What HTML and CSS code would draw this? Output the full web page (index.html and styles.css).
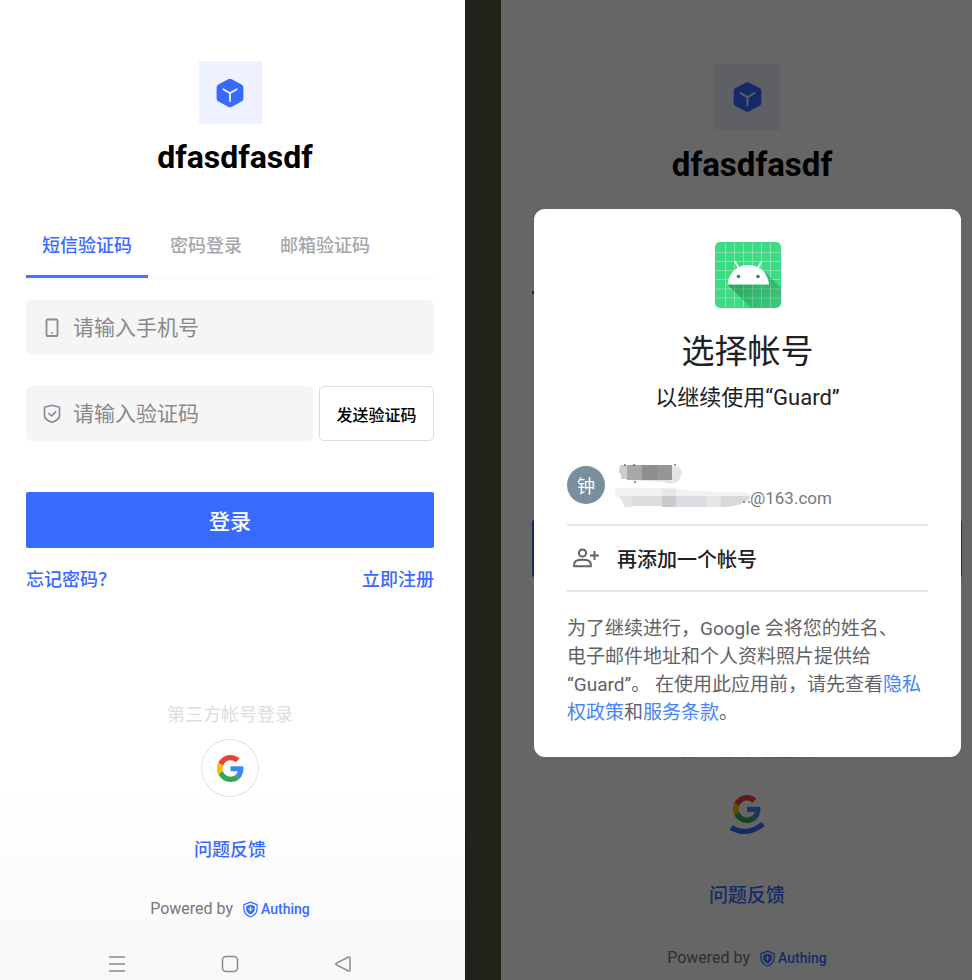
FILE: index.html
```html
<!DOCTYPE html>
<html lang="zh-CN">
<head>
<meta charset="utf-8">
<meta name="viewport" content="width=device-width, initial-scale=1">
<title>dfasdfasdf</title>
<link rel="stylesheet" href="styles.css">
</head>
<body>
<svg class="defs" aria-hidden="true">
  <symbol id="cube" viewBox="0 0 28 30">
    <path d="M12.2 1.2Q14 .2 15.800 1.200L25.600 6.400Q27.400 7.500 27.400 9.500V20.500Q27.400 22.500 25.600 23.600L15.800 28.800Q14 29.800 12.200 28.800L2.400 23.600Q.6 22.500 .6 20.500V9.500Q.6 7.500 2.400 6.400Z" fill="#396aff"/>
    <path d="M7.200 11.200 14 15.200 20.800 11.200M14 15.200V23" fill="none" stroke="#eef1ff" stroke-width="1.800" stroke-linecap="round" stroke-linejoin="round"/>
  </symbol>
  <symbol id="google" viewBox="0 0 48 48">
    <path fill="#ea4335" d="M24 9.500c3.540 0 6.710 1.220 9.210 3.600l6.850-6.850C35.900 2.380 30.470 0 24 0 14.620 0 6.510 5.380 2.560 13.220l7.980 6.190C12.430 13.720 17.740 9.500 24 9.500z"/>
    <path fill="#4285f4" d="M46.980 24.550c0-1.570-.15-3.090-.38-4.550H24v9.020h12.940c-.58 2.960-2.260 5.480-4.780 7.180l7.730 6c4.510-4.180 7.090-10.360 7.090-17.650z"/>
    <path fill="#fbbc05" d="M10.530 28.590c-.48-1.450-.76-2.990-.76-4.590s.27-3.140.76-4.590l-7.980-6.190C.92 16.460 0 20.120 0 24s.92 7.540 2.560 10.780l7.970-6.190z"/>
    <path fill="#34a853" d="M24 48c6.480 0 11.930-2.130 15.890-5.810l-7.730-6c-2.150 1.450-4.920 2.300-8.160 2.300-6.260 0-11.570-4.220-13.470-9.910l-7.980 6.190C6.510 42.620 14.620 48 24 48z"/>
  </symbol>
  <symbol id="authing" viewBox="0 0 16 18">
    <path d="M8 1.200 15 3.800V8.500C15 12.500 12 15.500 8 17 4 15.500 1 12.500 1 8.500V3.800Z" fill="none" stroke="#396aff" stroke-width="1.300" stroke-linejoin="round"/>
    <path d="M8 3.700 12.600 5.400V8.500C12.600 11.200 10.800 13.200 8 14.400 5.200 13.200 3.400 11.200 3.400 8.500V5.400Z" fill="#396aff"/>
    <path d="M8 5.800V11M6 7.600Q6 9.600 8 9.600T10 7.600" fill="none" stroke="#fff" stroke-width="1"/>
  </symbol>
</svg>

<main class="stage">
  <section class="screen screen-login">
    <header class="brand">
      <span class="brand-logo"><svg><use href="#cube"/></svg></span>
      <h1>dfasdfasdf</h1>
    </header>
    <nav class="tabs" aria-label="登录方式">
      <button type="button" class="tab active">短信验证码</button>
      <button type="button" class="tab">密码登录</button>
      <button type="button" class="tab">邮箱验证码</button>
    </nav>
    <form class="form">
      <label class="field">
        <svg viewBox="0 0 18 20" fill="none" stroke="#8a8b98" stroke-width="1.800"><rect x="3.500" y="1.500" width="11" height="16.500" rx="1"/><path d="M8 15h2" stroke-width="1.300"/></svg>
        <input type="tel" placeholder="请输入手机号" aria-label="请输入手机号">
      </label>
      <div class="code-row">
        <label class="field">
          <svg viewBox="0 0 18 20" fill="none" stroke="#8a8b98" stroke-width="1.700" stroke-linejoin="round" stroke-linecap="round"><path d="M9 1.300 16.500 3.300V11.500C16.500 14.500 13 17 9 18.300 5 17 1.500 14.500 1.500 11.500V3.300Z"/><path d="M5.800 9.500 8.500 12 12.600 7.800"/></svg>
          <input type="text" placeholder="请输入验证码" aria-label="请输入验证码">
        </label>
        <button type="button" class="send">发送验证码</button>
      </div>
      <button type="button" class="submit">登录</button>
    </form>
    <div class="links"><a href="#">忘记密码？</a><a href="#">立即注册</a></div>
    <p class="social-title">第三方帐号登录</p>
    <button type="button" class="google" aria-label="Google"><svg><use href="#google"/></svg></button>
    <a class="feedback" href="#">问题反馈</a>
    <p class="powered">Powered by <span class="authing"><svg><use href="#authing"/></svg>Authing</span></p>
    <nav class="sysbar">
      <button type="button" aria-label="菜单"><svg viewBox="0 0 18 18"><path d="M1 2h16M1 9h16M1 16h16"/></svg></button>
      <button type="button" aria-label="主页"><svg viewBox="0 0 18 18"><rect x="1.500" y="1.500" width="15" height="15" rx="3.500"/></svg></button>
      <button type="button" aria-label="返回"><svg viewBox="0 0 18 18"><path d="M14.500 2 2.500 8.200Q1 9 2.500 9.800L14.500 16Q16 16.500 16 15V3Q16 1.500 14.500 2Z"/></svg></button>
    </nav>
  </section>

  <div class="divider"></div>

  <section class="screen-chooser">
    <div class="backdrop">
      <header class="brand">
        <span class="brand-logo"><svg><use href="#cube"/></svg></span>
        <h1>dfasdfasdf</h1>
      </header>
      <div class="tab-line"></div>
      <div class="submit-bar"></div>
      <p class="social-title">第三方帐号登录</p>
      <div class="google-loading">
        <svg class="g"><use href="#google"/></svg>
        <svg class="arc" viewBox="0 0 36 14"><path d="M2 6.500Q18 16 34 3" fill="none" stroke="#396aff" stroke-width="5"/></svg>
      </div>
      <a class="feedback" href="#">问题反馈</a>
      <p class="powered">Powered by <span class="authing"><svg><use href="#authing"/></svg>Authing</span></p>
    </div>
    <div class="scrim"></div>
    <div class="dialog" role="dialog" aria-labelledby="dialog-title">
      <svg class="app-icon" viewBox="0 0 66 66">
        <defs>
          <clipPath id="tile"><rect width="66" height="66" rx="5"/></clipPath>
          <linearGradient id="shade" x1="0" y1="0" x2="1" y2="1"><stop offset="0" stop-color="#000" stop-opacity=".32"/><stop offset="1" stop-color="#000" stop-opacity=".06"/></linearGradient>
        </defs>
        <g clip-path="url(#tile)">
          <rect width="66" height="66" fill="#3ddc84"/>
          <path d="M10.500 0V66M19.500 0V66M28.500 0V66M37.500 0V66M46.500 0V66M55.500 0V66M0 10.500H66M0 19.500H66M0 28.500H66M0 37.500H66M0 47H66M0 56H66" stroke="#fff" stroke-opacity=".4" stroke-width=".8"/>
          <path d="M12.500 42.500 36 66H66V46L50 30 54 42.500Z" fill="url(#shade)"/>
        </g>
        <path d="M12.500 42.500C13.500 31 22 23 33.200 23S53 31 54 42.500Z" fill="#fff"/>
        <path d="M20 19.500 24 26.500M46.500 19.500 42.500 26.500" stroke="#fff" stroke-width="1.600" stroke-linecap="round"/>
        <circle cx="23.500" cy="34.500" r="1.800" fill="#24935a"/><circle cx="43" cy="34.500" r="1.800" fill="#24935a"/>
      </svg>
      <h2 id="dialog-title">选择帐号</h2>
      <p class="subtitle">以继续使用“Guard”</p>
      <button type="button" class="account">
        <span class="avatar">钟</span>
        <span class="identity">
          <svg class="masked-name" viewBox="0 0 66 20" aria-hidden="true">
            <path d="M4 1H10V15H4Q5 11 2 8 2 3 4 1Z" fill="#ccc"/><path d="M10 1H25V16H10Z" fill="#a9a8a9"/><path d="M25 1H40V16H25Z" fill="#8e8d90"/><path d="M40 1H55V16H40Z" fill="#969598"/><path d="M55 2Q64 2 65 8 64 14 60 18 52 21 47 18L10 16H55Z" fill="#e4e4e4"/><path d="M7 1h2M16 1h2M57 1h2M17 18h2" stroke="#333" stroke-width="1.200"/>
          </svg>
          <span class="mail">
            <svg viewBox="0 0 138 20" aria-hidden="true">
              <path d="M0 3Q0 0 4 0L60 0 76 3 122 4Q138 5 138 10H2Q0 8 0 3Z" fill="#f2f2f2"/><path d="M4 8H17V19H10Z" fill="#e4e4e5"/><path d="M17 8H47V18H17Z" fill="#dcdddf"/><path d="M47 8H61V19H47Z" fill="#c9cacc"/><path d="M47 1H61V8H47Z" fill="#e8e8e9"/><path d="M61 8H91V19H61Z" fill="#dcdde0"/><path d="M91 8H106V19H91Z" fill="#e6e6e7"/><path d="M106 8H134Q137 10 130 14 122 19 106 19Z" fill="#d8d9db"/><path d="M128 14h2M133 14h2" stroke="#777" stroke-width="1.500"/>
            </svg>@163.com</span>
        </span>
      </button>
      <button type="button" class="add">
        <svg viewBox="0 0 26 20" fill="none" stroke="#5f6368" stroke-width="2"><circle cx="9.500" cy="5" r="3.600"/><path d="M1.200 18.200V16C1.200 13 5 11.800 9.500 11.800S17.800 13 17.800 16V18.200ZM17 7.500H26M21.500 3V12"/></svg>
        再添加一个帐号
      </button>
      <p class="notice">为了继续进行，Google 会将您的姓名、<br>电子邮件地址和个人资料照片提供给<br>“Guard”。 在使用此应用前，请先查看<a href="#">隐私权政策</a>和<a href="#">服务条款</a>。</p>
    </div>
  </section>
</main>
</body>
</html>
```
FILE: styles.css
```css
* { box-sizing: border-box; }

body {
  margin: 0;
  font-family: Roboto, "Noto Sans CJK SC", sans-serif;
  font-size: 18px;
  color: #000;
}

h1, h2, p { margin: 0; }
a { color: #396aff; text-decoration: none; }
button { padding: 0; border: 0; background: none; font: inherit; color: inherit; cursor: pointer; }
svg { display: block; flex: none; }
.defs { position: absolute; width: 0; height: 0; }

.stage {
  display: grid;
  grid-template-columns: minmax(0, 465fr) 36px minmax(0, 471fr);
  min-height: 100vh;
}
.divider { background: #22211a; }

.screen-login {
  display: flex;
  flex-direction: column;
  padding: 61px 31px 0 26px;
  background: linear-gradient(#fff 80%, #f8f8f8);
}

.brand { display: flex; flex-direction: column; align-items: center; }
.brand-logo {
  display: grid;
  place-items: center;
  width: 63px;
  height: 63px;
  background: #eef1ff;
}
.brand-logo svg { width: 28px; height: 30px; }
.brand h1 { margin: 12px 0 0 10px; font-size: 32px; line-height: 42px; font-weight: 700; }

.tabs { display: flex; gap: 6px; margin-top: 34px; border-bottom: 1px solid #f6f6f6; }
.tab { height: 66px; padding: 0 16px; color: #a6a6a8; font-weight: 500; border-bottom: 3px solid transparent; }
.tab.active { color: #396aff; border-color: #4a74f5; }

.form { margin-top: 21px; }
.field {
  display: flex;
  align-items: center;
  flex: 1;
  min-width: 0;
  gap: 12px;
  height: 55px;
  padding: 0 17px;
  border-radius: 5px;
  background: #f5f5f6;
}
.field svg { width: 18px; height: 20px; }
.field input {
  flex: 1;
  min-width: 0;
  padding: 0;
  border: 0;
  outline: 0;
  background: none;
  font: inherit;
  font-size: 21px;
}
.field input::placeholder { color: #89898b; opacity: 1; }
.code-row { display: flex; gap: 6px; margin-top: 31px; }
.send {
  flex: none;
  width: 115px;
  border: 1px solid #dcdcdf;
  border-radius: 5px;
  background: #fff;
  font-size: 16px;
  font-weight: 500;
}
.submit {
  width: 100%;
  height: 56px;
  margin-top: 51px;
  border-radius: 2px;
  background: #396aff;
  color: #fff;
  font-size: 21px;
  font-weight: 500;
}
.links { display: flex; justify-content: space-between; margin-top: 18px; line-height: 28px; font-weight: 500; }

.social-title { margin-top: 107px; text-align: center; line-height: 28px; color: #dddce0; }
.google {
  display: grid;
  place-items: center;
  align-self: center;
  width: 58px;
  height: 58px;
  margin-top: 10px;
  border: 1px solid #e1dde6;
  border-radius: 50%;
  background: #fff;
}
.google svg { width: 27px; height: 27px; }
.feedback { align-self: center; margin-top: 39px; line-height: 28px; font-weight: 500; }
.powered { display: flex; justify-content: center; gap: 10px; margin-top: 31px; font-size: 16px; line-height: 28px; color: #77777a; }
.authing { display: flex; align-items: center; gap: 3px; color: #396aff; font-size: 14px; font-weight: 500; }
.authing svg { width: 15px; height: 17px; }

.sysbar { display: flex; justify-content: center; gap: 95px; margin-top: 32px; }
.sysbar svg { width: 18px; height: 18px; fill: none; stroke: #8b8b8d; stroke-width: 1.5; }

.screen-chooser { display: grid; align-items: start; overflow: hidden; background: #fff; }
.backdrop, .scrim, .dialog { grid-area: 1 / 1; }
.backdrop { display: flex; flex-direction: column; padding: 64px 10px 0 31px; }
.scrim { align-self: stretch; background: rgba(0, 0, 0, .6); z-index: 1; }
.backdrop .brand-logo { width: 66px; height: 66px; }
.backdrop .brand-logo svg { width: 29px; height: 32px; }
.backdrop h1 { margin-top: 14px; font-size: 33px; }
.tab-line { width: 130px; height: 3px; margin-top: 105px; background: #396aff; }
.submit-bar { height: 57px; margin-top: 226px; border-radius: 2px; background: #396aff; }
.backdrop .social-title { margin-top: 160px; font-size: 19px; }
.google-loading { display: flex; flex-direction: column; align-items: center; margin-top: 30px; }
.google-loading .g { width: 28px; height: 28px; }
.google-loading .arc { width: 36px; height: 14px; margin-top: -2px; }
.backdrop .feedback { margin-top: 47px; font-size: 19px; }
.backdrop .powered { margin-top: 34px; }

.dialog {
  z-index: 2;
  display: flex;
  flex-direction: column;
  margin: 209px 11px 0 33px;
  padding: 33px 33px 30px;
  border-radius: 11px;
  background: #fff;
}
.app-icon { align-self: center; width: 66px; height: 66px; }
.dialog h2 { margin-top: 22px; text-align: center; font-size: 33px; line-height: 44px; font-weight: 400; color: #202124; }
.subtitle { margin-top: 8px; text-align: center; font-size: 22px; line-height: 32px; color: #202124; }
.account {
  display: flex;
  align-items: flex-start;
  gap: 10px;
  margin-top: 50px;
  padding-bottom: 14px;
  border-bottom: 2px solid #e6e6e7;
  text-align: left;
}
.avatar {
  display: grid;
  place-items: center;
  width: 38px;
  height: 38px;
  margin-top: 2px;
  border-radius: 50%;
  background: #78909c;
  color: #fff;
  font-size: 18px;
}
.masked-name { width: 66px; height: 20px; margin-left: 2px; }
.mail { display: flex; align-items: center; margin-top: 2px; font-size: 17px; line-height: 24px; color: #77787b; }
.mail svg { width: 138px; height: 20px; margin-right: -3px; }
.add {
  display: flex;
  align-items: center;
  gap: 18px;
  height: 66px;
  padding-left: 6px;
  border-bottom: 2px solid #e6e6e7;
  font-size: 20px;
  font-weight: 500;
  color: #202124;
}
.add svg { width: 26px; height: 20px; }
.notice { margin-top: 23px; font-size: 19px; line-height: 28px; color: #5f6368; }
.notice a { color: #4285f4; }
```
